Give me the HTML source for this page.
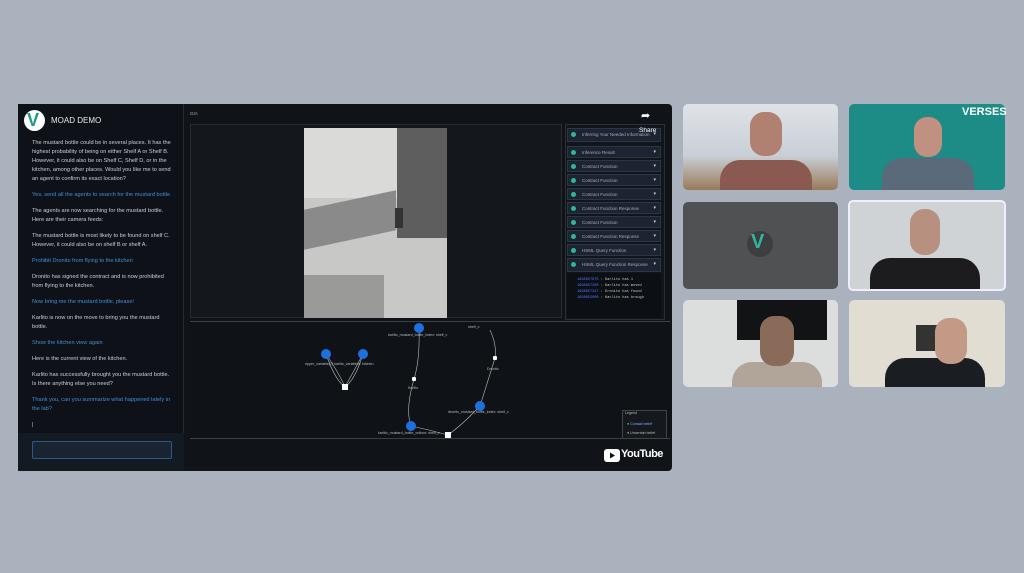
<!DOCTYPE html>
<html><head><meta charset="utf-8"><style>
*{margin:0;padding:0;box-sizing:border-box}
body{width:1024px;height:573px;overflow:hidden;background:#aab3bd;font-family:"Liberation Sans",sans-serif;position:relative}
.a{position:absolute}
.chat p{font-size:5.6px;line-height:9px;color:#c9ced6;margin-bottom:7px}
.chat p.u{color:#3f8fd6}
.it{position:absolute;left:567px;width:94px;height:12px;background:#1b2430;border:1px solid #2c3644;font-size:4.5px;color:#aab;padding:3px 0 0 14px}
.it:before{content:"";position:absolute;left:3px;top:3px;width:5px;height:5px;border-radius:50%;background:#2fb59a}
.it:after{content:"▾";position:absolute;right:4px;top:2px;color:#ccc;font-size:5px}
.lb{position:absolute;font-size:3.6px;color:#bbb}
.nd{position:absolute;width:10px;height:10px;border-radius:50%;background:#1e6fe0}
.sq{position:absolute;width:6px;height:6px;background:#fff}
.dt{position:absolute;width:4px;height:4px;background:#fff;border-radius:1px}
.t{position:absolute;border-radius:5px;overflow:hidden}
</style></head><body>
<div class="a" style="left:18px;top:104px;width:654px;height:367px;background:#101418;border-radius:4px"></div>
<div class="a" style="left:18px;top:104px;width:166px;height:367px;background:#0e1218;border-right:1px solid #222a33"></div>
<div class="a" style="left:24px;top:110px;width:21px;height:21px;border-radius:50%;background:#fff"></div>
<div class="a" style="left:27px;top:110px;font-size:18px;font-weight:bold;color:#1d9a86">V</div>
<div class="a" style="left:51px;top:116px;font-size:8px;color:#e8e8e8">MOAD DEMO</div>
<div class="a chat" style="left:32px;top:139px;width:142px">
<p>The mustard bottle could be in several places. It has the highest probability of being on either Shelf A or Shelf B. However, it could also be on Shelf C, Shelf D, or in the kitchen, among other places. Would you like me to send an agent to confirm its exact location?</p>
<p class="u">Yes, send all the agents to search for the mustard bottle</p>
<p>The agents are now searching for the mustard bottle. Here are their camera feeds:</p>
<p>The mustard bottle is most likely to be found on shelf C. However, it could also be on shelf B or shelf A.</p>
<p class="u">Prohibit Dronito from flying to the kitchen</p>
<p>Dronito has signed the contract and is now prohibited from flying to the kitchen.</p>
<p class="u">Now bring me the mustard bottle, please!</p>
<p>Karlito is now on the move to bring you the mustard bottle.</p>
<p class="u">Show the kitchen view again</p>
<p>Here is the current view of the kitchen.</p>
<p>Karlito has successfully brought you the mustard bottle. Is there anything else you need?</p>
<p class="u">Thank you, can you summarize what happened lately in the lab?</p>
<p>|</p></div>
<div class="a" style="left:18px;top:433px;width:166px;height:38px;background:#141a22"></div>
<div class="a" style="left:32px;top:441px;width:140px;height:18px;background:#1a2430;border:1px solid #2a5a8a;border-radius:2px"></div>
<div class="a" style="left:190px;top:111px;font-size:4.5px;color:#aaa">GIA</div>
<div class="a" style="left:190px;top:124px;width:372px;height:194px;background:#14181d;border:1px solid #262c33"></div>
<div class="a" style="left:304px;top:128px;width:143px;height:190px;background:#c8c8c6"></div>
<div class="a" style="left:304px;top:128px;width:93px;height:70px;background:#dadad8"></div>
<div class="a" style="left:304px;top:200px;width:92px;height:40px;background:#8a8a8a;transform:skewY(-12deg)"></div>
<div class="a" style="left:397px;top:128px;width:50px;height:110px;background:#5e5e5e"></div>
<div class="a" style="left:395px;top:208px;width:8px;height:20px;background:#333"></div>
<div class="a" style="left:304px;top:275px;width:80px;height:43px;background:#9a9a98"></div>
<div class="a" style="left:190px;top:321px;width:480px;height:118px;background:#0f1317;border-top:1px solid #3a4048;border-bottom:1px solid #3a4048"></div>
<svg class="a" style="left:0;top:0" width="1024" height="573"><g fill="none" stroke="#bbb" stroke-width=".6">
<path d="M326 354 Q335 380 345 387 M363 354 Q355 380 345 387 M326 354 Q340 375 345 387 M363 354 Q350 378 345 387"/>
<path d="M419 328 Q420 360 414 379 Q405 410 411 426 Q430 430 448 435"/>
<path d="M490 330 Q497 345 495 358 Q485 390 480 406 Q462 425 448 435"/></g></svg>
<div class="nd" style="left:414px;top:323px"></div><div class="nd" style="left:321px;top:349px"></div><div class="nd" style="left:358px;top:349px"></div><div class="nd" style="left:475px;top:401px"></div><div class="nd" style="left:406px;top:421px"></div>
<div class="sq" style="left:342px;top:384px"></div><div class="sq" style="left:445px;top:432px"></div>
<div class="dt" style="left:412px;top:377px"></div><div class="dt" style="left:493px;top:356px"></div>
<div class="lb" style="left:388px;top:333px">karlito_mustard_bottle_index: shelf_c</div>
<div class="lb" style="left:305px;top:362px">ripper_variable(?)  karlito_variables: kitchen</div>
<div class="lb" style="left:408px;top:386px">Karlito</div><div class="lb" style="left:487px;top:367px">Dronito</div>
<div class="lb" style="left:468px;top:325px">shelf_c</div>
<div class="lb" style="left:448px;top:410px">dronito_mustard_bottle_index: shelf_c</div>
<div class="lb" style="left:378px;top:431px">karlito_mustard_bottle_outbox: shelf_c</div>
<div class="a" style="left:622px;top:410px;width:45px;height:29px;border:1px solid #444;background:#15191e"></div>
<div class="lb" style="left:625px;top:411px">Legend</div>
<div class="lb" style="left:627px;top:422px;color:#8af">● Contact belief</div><div class="lb" style="left:627px;top:431px">● Uncertain belief</div>
<div class="a" style="left:565px;top:124px;width:100px;height:196px;background:#11161c;border:1px solid #2a3038"></div>
<div class="it" style="top:128px;height:14px">Inferring Your Needed Information</div>
<div class="it" style="top:146px">Inference Result</div>
<div class="it" style="top:160px">Contract Function</div>
<div class="it" style="top:174px">Contract Function</div>
<div class="it" style="top:188px">Contract Function</div>
<div class="it" style="top:202px">Contract Function Response</div>
<div class="it" style="top:216px">Contract Function</div>
<div class="it" style="top:230px">Contract Function Response</div>
<div class="it" style="top:244px">HSML Query Function</div>
<div class="it" style="top:258px;height:14px">HSML Query Function Response</div>
<div class="a" style="left:567px;top:273px;width:94px;height:45px;background:#0c1015;font-size:3.6px;line-height:6px;color:#ccc;padding:4px 0 0 10px;font-family:'Liberation Mono',monospace"><span style="color:#57f">1698657675</span> : Karlito has 1<br><span style="color:#57f">1698657200</span> : Karlito has moved<br><span style="color:#57f">1698657347</span> : Dronito has found<br><span style="color:#57f">1698652000</span> : Karlito has brough</div>
<div class="a" style="left:639px;top:127px;font-size:6.5px;color:#fff">Share</div>
<div class="a" style="left:641px;top:109px;font-size:11px;color:#fff">➦</div>
<svg class="a" style="left:604px;top:449px" width="16" height="14"><rect width="16" height="13" rx="3" fill="#fff"/><path d="M6 3.5 L11 6.5 L6 9.5Z" fill="#111"/></svg>
<div class="a" style="left:621px;top:448px;font-size:11px;font-weight:bold;color:#fff;letter-spacing:-.5px">YouTube</div>
<div class="t" style="left:683px;top:104px;width:155px;height:86px;background:linear-gradient(#dfe3e8,#c9cfd6 60%,#9a7a5a)"></div>
<div class="a" style="left:720px;top:160px;width:92px;height:30px;background:#8a5a50;border-radius:20px 20px 0 0"></div>
<div class="a" style="left:750px;top:112px;width:32px;height:44px;background:#b08070;border-radius:14px"></div>
<div class="t" style="left:849px;top:104px;width:156px;height:86px;background:#1d8b86"></div>
<div class="a" style="left:962px;top:106px;font-size:11px;font-weight:bold;color:#fff">VERSES</div>
<div class="a" style="left:882px;top:158px;width:92px;height:32px;background:#5a6a7a;border-radius:20px 20px 0 0"></div>
<div class="a" style="left:914px;top:117px;width:28px;height:40px;background:#c09080;border-radius:13px"></div>
<div class="t" style="left:683px;top:202px;width:155px;height:87px;background:#505152"></div>
<div class="a" style="left:747px;top:231px;width:26px;height:26px;border-radius:50%;background:#3d3e3f"></div>
<div class="a" style="left:751px;top:231px;font-size:20px;font-weight:bold;color:#35b3a0">V</div>
<div class="t" style="left:848px;top:200px;width:158px;height:91px;border:2px solid #eef;background:#d0d3d5"></div>
<div class="a" style="left:870px;top:258px;width:110px;height:31px;background:#1c1c1e;border-radius:20px 20px 0 0"></div>
<div class="a" style="left:910px;top:209px;width:30px;height:46px;background:#b89080;border-radius:14px"></div>
<div class="t" style="left:683px;top:300px;width:155px;height:87px;background:#dcdddd"></div>
<div class="a" style="left:737px;top:300px;width:90px;height:40px;background:#121314"></div>
<div class="a" style="left:732px;top:362px;width:90px;height:25px;background:#b0a598;border-radius:20px 20px 0 0"></div>
<div class="a" style="left:760px;top:316px;width:34px;height:50px;background:#8a6a58;border-radius:14px"></div>
<div class="t" style="left:849px;top:300px;width:156px;height:87px;background:#e2ddd2"></div>
<div class="a" style="left:916px;top:325px;width:26px;height:26px;background:#333"></div>
<div class="a" style="left:885px;top:358px;width:100px;height:29px;background:#1a1d22;border-radius:20px 20px 0 0"></div>
<div class="a" style="left:935px;top:318px;width:32px;height:46px;background:#c29a86;border-radius:14px"></div>
</body></html>
